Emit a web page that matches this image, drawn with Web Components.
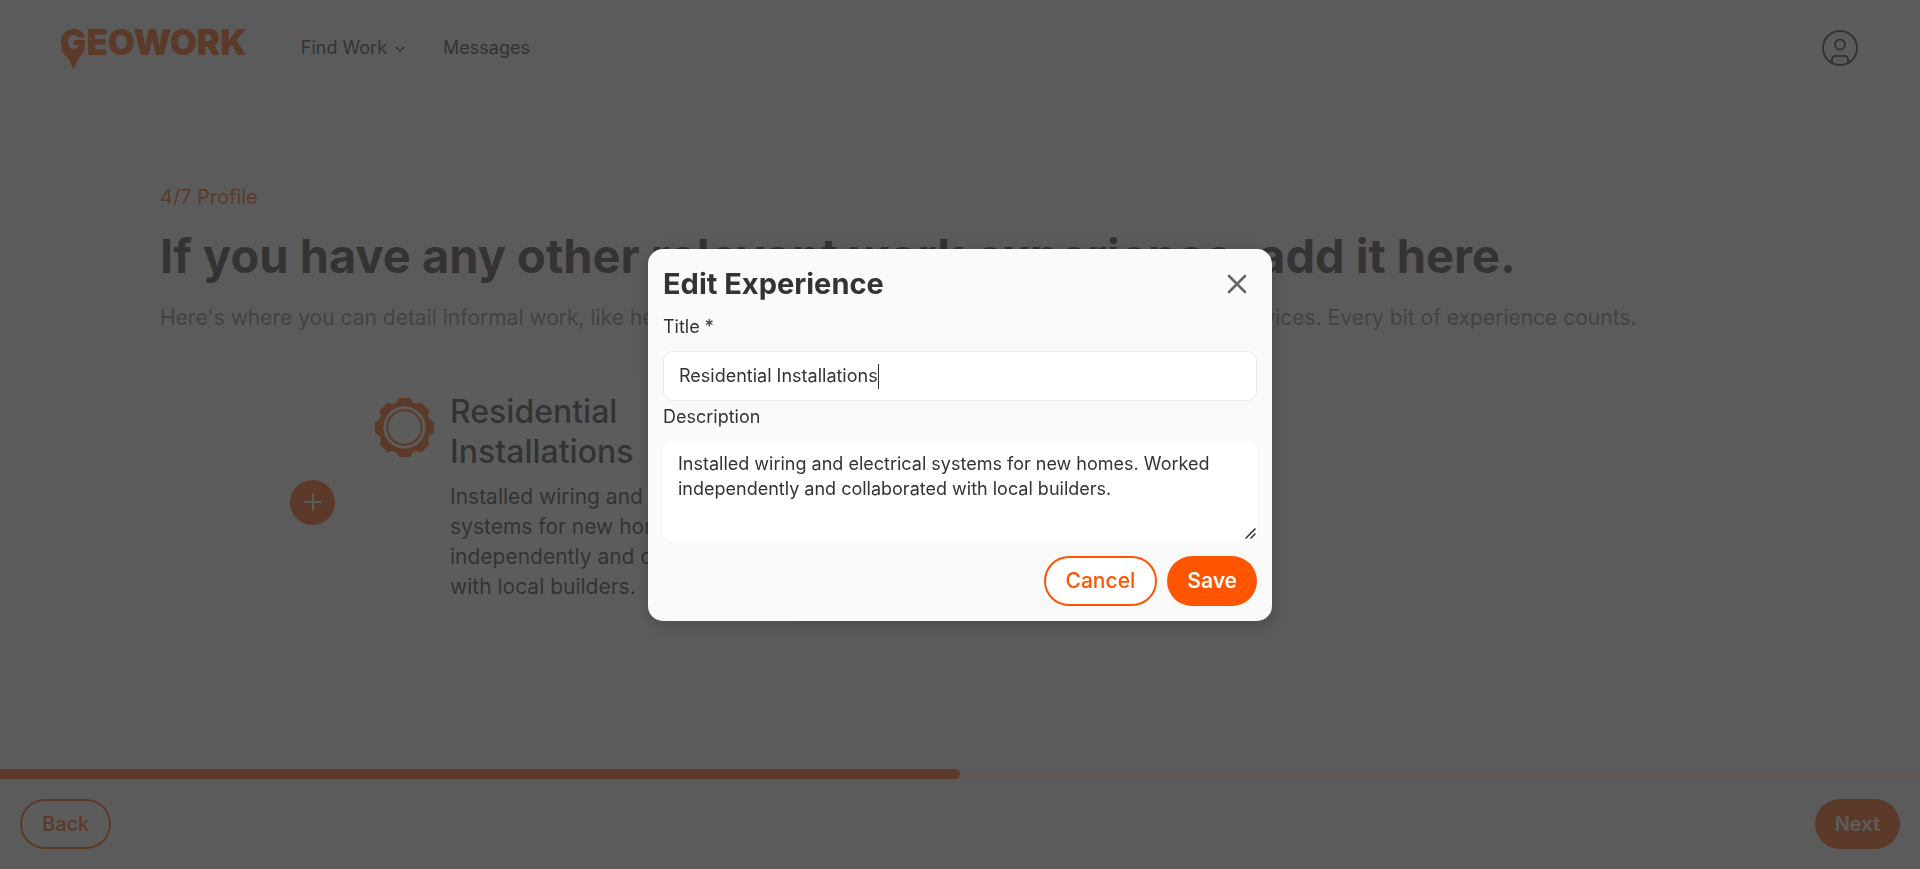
<!DOCTYPE html>
<html lang="en">
<head>
<meta charset="utf-8">
<meta name="viewport" content="width=device-width, initial-scale=1">
<title>Geowork – Profile</title>
<style>
  :root {
    --orange: #ff5500;
    --ink: #333333;
    --muted: #808080;
    --paper: #fafafa;
  }
  body {
    margin: 0;
    background: var(--paper);
    color: var(--ink);
    font-family: Inter, "Open Sans", sans-serif;
  }
</style>
</head>
<body>
<geo-page>
  <geo-header slot="header"></geo-header>
  <geo-step step="4/7 Profile" heading="If you have any other relevant work experience, add it here.">
    <span slot="intro">Here's where you can detail informal work, like helping neighbors with home projects and volunteering your services. Every bit of experience counts.</span>
    <geo-experience-card>
      <span slot="title">Residential Installations</span>
      <span slot="description">Installed wiring and electrical systems for new homes. Worked independently and collaborated with local builders.</span>
    </geo-experience-card>
  </geo-step>
  <geo-footer slot="footer"></geo-footer>
</geo-page>
<geo-edit-dialog></geo-edit-dialog>

<script>
function define(name, markup, ready) {
  customElements.define(name, class extends HTMLElement {
    connectedCallback() {
      if (this.shadowRoot) return;
      const root = this.attachShadow({ mode: 'open' });
      root.innerHTML = markup;
      if (ready) ready(root, this);
    }
  });
}

define('geo-page', `
  <style>
    :host { display: flex; flex-direction: column; min-height: 100vh; }
    main { flex: 1; padding: 86px 160px 40px; }
  </style>
  <slot name="header"></slot>
  <main><slot></slot></main>
  <slot name="footer"></slot>`);

define('geo-button', `
  <style>
    :host { display: inline-block; }
    button {
      display: block; box-sizing: border-box; height: 50px; padding: 0 20px;
      border: 0; border-radius: 25px; cursor: pointer;
      background: var(--orange); color: #fff;
      font: inherit; font-weight: 600; font-size: var(--button-size, 20px);
    }
    :host([outline]) button {
      border: 2px solid var(--orange); background: #fff; color: var(--orange); font-weight: 500;
    }
  </style>
  <button type="button"><slot></slot></button>`);

define('geo-logo', `
  <style>
    :host { display: block; }
    a { display: block; position: relative; height: 40px; color: var(--orange); text-decoration: none; }
    b { display: block; font-size: 35px; font-weight: 900; line-height: 28px; }
    svg { position: absolute; left: 0; top: 18px; }
  </style>
  <a href="#" aria-label="Geowork home"><b>GEOWORK</b>
    <svg width="27" height="22" viewBox="0 0 27 22" fill="currentColor" aria-hidden="true">
      <path d="M1 0C3 6 8 9 14 9C19 9 23 6 25 2C25 5 22 9 19 12C17 15 16 18 15 21Q13.500 23 12 21C11 18 10 15 8 12C5 9 1 6 1 0Z"/>
    </svg>
  </a>`);

define('geo-header', `
  <style>
    :host { display: block; }
    header { display: flex; align-items: center; height: 96px; padding: 0 62px 0 60px; }
    nav { display: flex; gap: 38px; margin-left: 54px; flex: 1; font-size: 18px; line-height: 28px; }
    nav a { display: flex; align-items: center; gap: 8px; color: inherit; text-decoration: none; }
    button { padding: 0; border: 0; background: none; color: inherit; cursor: pointer; }
    svg { display: block; fill: none; stroke: currentColor; }
  </style>
  <header>
    <geo-logo></geo-logo>
    <nav aria-label="Main">
      <a href="#">Find Work
        <svg width="10" height="10" viewBox="0 0 10 10" stroke-width="1.200" stroke-linecap="round" stroke-linejoin="round" aria-hidden="true"><path d="M1 4l4 4 4-4"/></svg>
      </a>
      <a href="#">Messages</a>
    </nav>
    <button type="button" aria-label="Account">
      <svg width="36" height="36" viewBox="0 0 36 36" stroke-width="2" aria-hidden="true">
        <circle cx="18" cy="18" r="17"/><circle cx="18" cy="14.500" r="5"/>
        <path d="M10 33v-3.500a3.500 3.500 0 0 1 3.500-3.500h9a3.500 3.500 0 0 1 3.500 3.500V33"/>
      </svg>
    </button>
  </header>`);

define('geo-step', `
  <style>
    :host { display: block; }
    p, h1 { margin: 0; }
    .step { margin-bottom: 8px; color: var(--orange); font-size: 20px; line-height: 30px; }
    h1 { margin-bottom: 10px; font-size: 47px; font-weight: 700; line-height: 72px; }
    .intro { color: var(--muted); font-size: 21px; line-height: 32px; }
    .items { display: flex; align-items: center; gap: 15px; margin: 38px 0 0 130px; }
    .add {
      display: grid; place-items: center; width: 45px; height: 45px; padding: 0;
      border: 0; border-radius: 50%; background: var(--orange); color: var(--paper); cursor: pointer;
    }
  </style>
  <p class="step"></p>
  <h1></h1>
  <p class="intro"><slot name="intro"></slot></p>
  <div class="items">
    <button class="add" type="button" aria-label="Add experience">
      <svg width="18" height="18" viewBox="0 0 18 18" fill="none" stroke="currentColor" stroke-width="2" stroke-linecap="round" aria-hidden="true"><path d="M9 1v16M1 9h16"/></svg>
    </button>
    <slot></slot>
  </div>`, (root, host) => {
    root.querySelector('.step').textContent = host.getAttribute('step');
    root.querySelector('h1').textContent = host.getAttribute('heading');
  });

define('geo-experience-card', `
  <style>
    :host {
      display: flex; align-items: flex-start; gap: 16px; box-sizing: border-box;
      width: 450px; padding: 20px 20px 30px 25px; border-radius: 25px; background: #fff;
    }
    .gear { flex: none; margin-top: 6px; color: var(--orange); }
    h2, p { margin: 0; }
    h2 { margin-bottom: 10px; font-size: 32px; font-weight: 500; line-height: 40px; }
    p { font-size: 21px; line-height: 30px; }
  </style>
  <svg class="gear" width="59" height="59" viewBox="-30 -30 60 60" fill="currentColor" aria-hidden="true"></svg>
  <div>
    <h2><slot name="title"></slot></h2>
    <p><slot name="description"></slot></p>
  </div>`, root => {
    // Eight flat teeth joined by shallow valleys around a ring.
    const at = (radius, degrees) => {
      const a = degrees * Math.PI / 180;
      return (radius * Math.sin(a)).toFixed(1) + ' ' + (-radius * Math.cos(a)).toFixed(1);
    };
    let d = '';
    for (let i = 0; i < 8; i++) {
      const c = i * 45;
      d += (i ? 'L' : 'M') + at(30.6, c - 11) + 'L' + at(30.6, c + 11) +
           'L' + at(27.6, c + 16) + 'Q' + at(25.6, c + 22.5) + ' ' + at(27.6, c + 29);
    }
    const ring = r => `M${-r} 0a${r} ${r} 0 1 0 ${2 * r} 0a${r} ${r} 0 1 0 ${-2 * r} 0z`;
    root.querySelector('svg').innerHTML =
      `<path fill-rule="evenodd" d="${d}z${ring(21.5)}"/><circle r="17.500" fill="none" stroke="currentColor" stroke-width="2"/>`;
  });

define('geo-footer', `
  <style>
    :host { display: block; }
    .track { height: 10px; background: #ffeee5; }
    .bar { width: 50%; height: 100%; border-radius: 0 5px 5px 0; background: var(--orange); }
    footer { display: flex; justify-content: space-between; padding: 20px; }
  </style>
  <div class="track" role="progressbar" aria-label="Profile progress" aria-valuenow="50"><div class="bar"></div></div>
  <footer>
    <geo-button outline>Back</geo-button>
    <geo-button>Next</geo-button>
  </footer>`);

define('geo-edit-dialog', `
  <style>
    :host { display: contents; }
    dialog {
      box-sizing: border-box; width: 624px; max-width: calc(100vw - 32px); padding: 15px;
      border: 0; border-radius: 15px; background: var(--paper); color: var(--ink);
      box-shadow: 0 4px 16px rgba(0, 0, 0, .2);
    }
    dialog::backdrop { background: rgba(51, 51, 51, .8); }
    .head { display: flex; align-items: center; justify-content: space-between; margin-bottom: 7px; }
    h2 { margin: 0; font-size: 29px; font-weight: 700; line-height: 40px; }
    .close { display: grid; place-items: center; width: 40px; height: 40px; padding: 0; border: 0; background: none; color: #666; cursor: pointer; }
    label { display: block; margin-bottom: 8px; font-size: 18px; line-height: 32px; }
    .field { position: relative; }
    input, textarea {
      display: block; box-sizing: border-box; width: 100%; border: 1px solid #ebebeb; border-radius: 10px;
      outline: 0; background: #fff; color: var(--ink); font: inherit; font-size: 18px;
    }
    input { height: 50px; padding: 0 15px; caret-color: transparent; }
    textarea { height: 100px; padding: 10px 15px; border: 0; line-height: 25px; resize: vertical; }
    textarea::-webkit-resizer { background: transparent; }
    .caret { position: absolute; top: 13px; width: 1px; height: 25px; background: var(--ink); pointer-events: none; }
    .grip { position: absolute; right: 1px; bottom: 2px; pointer-events: none; }
    .actions { display: flex; justify-content: flex-end; gap: 10px; margin-top: 15px; --button-size: 21px; }
  </style>
  <dialog aria-labelledby="heading">
    <div class="head">
      <h2 id="heading">Edit Experience</h2>
      <button class="close" type="button" aria-label="Close">
        <svg width="20" height="20" viewBox="0 0 20 20" fill="none" stroke="currentColor" stroke-width="2.600" stroke-linecap="round" aria-hidden="true"><path d="M2 2l16 16M18 2L2 18"/></svg>
      </button>
    </div>
    <label for="title">Title *</label>
    <div class="field">
      <input id="title" type="text" value="Residential Installations" required autofocus>
      <span class="caret"></span>
    </div>
    <label for="description">Description</label>
    <div class="field">
      <textarea id="description">Installed wiring and electrical systems for new homes. Worked independently and collaborated with local builders.</textarea>
      <svg class="grip" width="11" height="11" viewBox="0 0 11 11" fill="none" stroke="#333" stroke-width="1.500" aria-hidden="true"><path d="M.5 10.500l10-10M5.500 10.500l5-5"/></svg>
    </div>
    <div class="actions">
      <geo-button outline class="cancel">Cancel</geo-button>
      <geo-button class="save">Save</geo-button>
    </div>
  </dialog>`, root => {
    const dialog = root.querySelector('dialog');
    const title = root.querySelector('#title');
    const caret = root.querySelector('.caret');
    const pen = document.createElement('canvas').getContext('2d');

    // Keeps the drawn caret at the insertion point of the title box.
    const placeCaret = () => {
      const style = getComputedStyle(title);
      pen.font = style.fontWeight + ' ' + style.fontSize + ' ' + style.fontFamily;
      const width = pen.measureText(title.value.slice(0, title.selectionEnd)).width;
      caret.style.left = Math.round(16 + width - title.scrollLeft) + 'px';
    };
    for (const type of ['input', 'keyup', 'click', 'focus']) title.addEventListener(type, placeCaret);
    title.addEventListener('focus', () => { caret.hidden = false; });
    title.addEventListener('blur', () => { caret.hidden = true; });

    for (const b of root.querySelectorAll('.close, .cancel, .save')) b.addEventListener('click', () => dialog.close());
    dialog.showModal();
    title.focus();
    title.setSelectionRange(title.value.length, title.value.length);
    placeCaret();
  });
</script>
</body>
</html>
